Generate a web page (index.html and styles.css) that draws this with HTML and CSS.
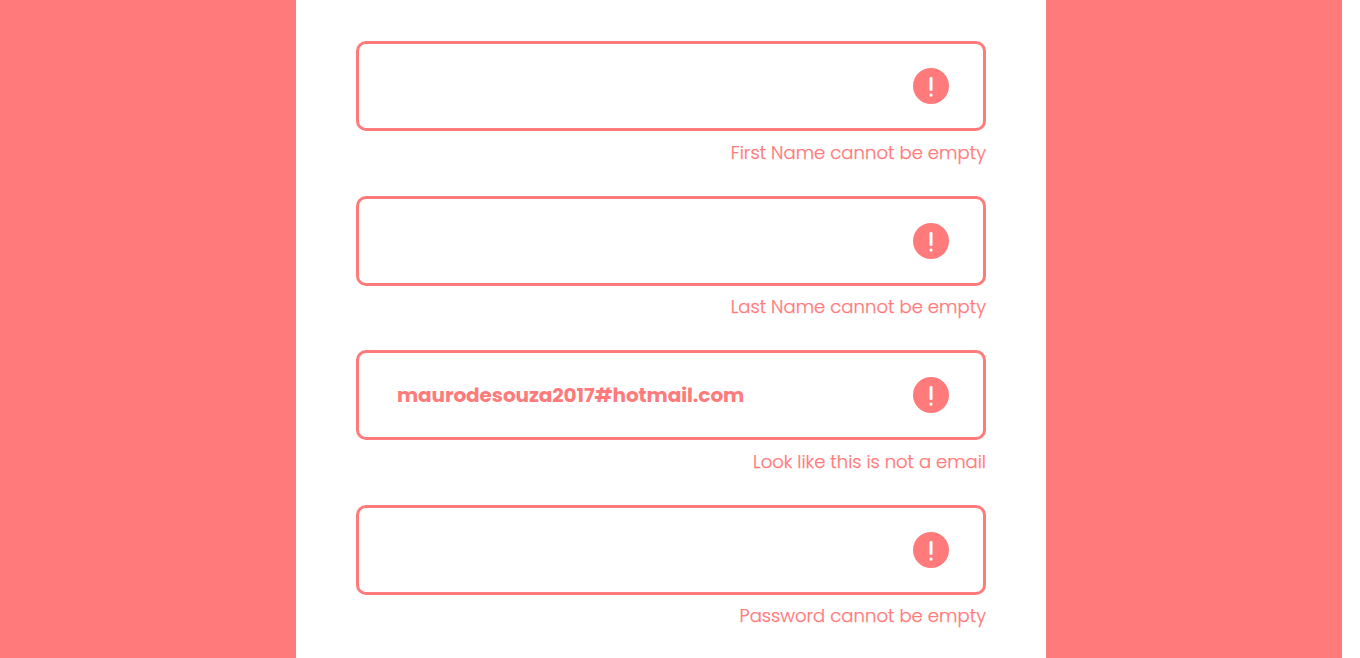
FILE: index.html
```html
<!DOCTYPE html>
<html lang="en">
<head>
<meta charset="utf-8">
<title>Sign up</title>
<link rel="stylesheet" href="styles.css">
</head>
<body>
<svg class="sprite" aria-hidden="true">
  <symbol id="error" viewBox="0 0 36 36">
    <circle cx="18" cy="18" r="18" fill="#ff7a7a"/>
    <rect x="16.5" y="9" width="3" height="14" rx="1.3" fill="#fff"/>
    <circle cx="18" cy="27.1" r="1.65" fill="#fff"/>
  </symbol>
</svg>
<main class="page">
  <form class="card">
    <div class="group">
      <div class="field"><span class="value"></span><svg class="icon"><use href="#error"/></svg></div>
      <p class="message">First Name cannot be empty</p>
    </div>
    <div class="group">
      <div class="field"><span class="value"></span><svg class="icon"><use href="#error"/></svg></div>
      <p class="message">Last Name cannot be empty</p>
    </div>
    <div class="group">
      <div class="field"><span class="value">maurodesouza2017#hotmail.com</span><svg class="icon"><use href="#error"/></svg></div>
      <p class="message message-email">Look like this is not a email</p>
    </div>
    <div class="group">
      <div class="field"><span class="value"></span><svg class="icon"><use href="#error"/></svg></div>
      <p class="message">Password cannot be empty</p>
    </div>
  </form>
</main>
</body>
</html>
```
FILE: styles.css
```css
* { box-sizing: border-box; }
body { margin: 0; background: #fff; overflow: hidden; font-family: Poppins, Inter, sans-serif; }
.sprite { display: none; }
.page { width: 1342px; height: 658px; background: #ff7a7a; padding-left: 296px; }
.card { width: 750px; height: 100%; background: #fff; padding: 41px 60px 0; }
.group { height: 154.6px; }
.field { height: 90px; border: 3px solid #ff7a7a; border-radius: 10px; padding: 0 34px 0 38px; display: flex; align-items: center; justify-content: space-between; }
.value { color: #ff7a7a; font-size: 20px; font-weight: 700; line-height: 30px; letter-spacing: -0.09px; white-space: nowrap; }
.icon { width: 36px; height: 36px; flex: none; }
.message { margin: 7.6px 0 0; color: #ff7a7a; font-size: 18px; font-weight: 300; line-height: 27px; letter-spacing: 0.04px; text-align: right; white-space: nowrap; -webkit-text-stroke: 0.25px #ff7a7a; }
.message-email { letter-spacing: 0; }
```
